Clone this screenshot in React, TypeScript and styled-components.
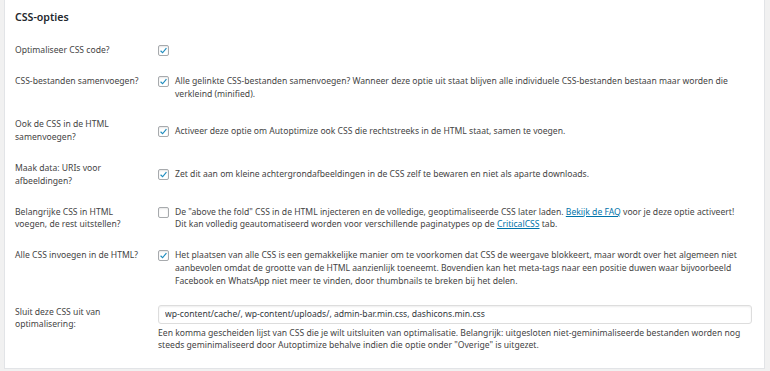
import React from 'react'
import styled, { createGlobalStyle } from 'styled-components'

const GlobalStyle = createGlobalStyle`
	html, body {
		margin: 0;
		padding: 0;
		background: #f1f1f1;
	}
	body {
		font-family: 'Noto Sans', 'Open Sans', sans-serif;
		font-size: 8.6px;
		color: #444;
	}
`

const Page = styled.div`
	padding: 0 5px 6px 4px;
`
const Panel = styled.div`
	background: #fff;
	border: 1px solid #e2e4e7;
	border-top: none;
	padding: 10px 12px 7px 9px;
`
const Title = styled.h2`
	margin: 0 0 11px 1px;
	font-size: 10.6px;
	line-height: 14px;
	font-weight: 600;
	color: #23282d;
`
const Row = styled.div`
	display: grid;
	grid-template-columns: 144px 1fr;
	padding: 9px 0;
	line-height: 12.8px;
`
const Label = styled.div`
	align-self: start;
	width: 130px;
	padding-left: 1px;
`
const Field = styled.div`
	align-self: center;
	display: flex;
	align-items: flex-start;
	gap: 6px;
`
const Box = styled.span`
	flex: none;
	width: 11px;
	height: 11px;
	margin-top: 1px;
	box-sizing: border-box;
	border: 1px solid #a7aaad;
	border-radius: 2px;
	background: #fff;
	box-shadow: inset 0 1px 2px rgba(0, 0, 0, 0.1);
	display: flex;
	align-items: center;
	justify-content: center;
`
const Text = styled.div`
	flex: 1;
`
const Link = styled.a`
	color: #0073aa;
	text-decoration: underline;
`
const Stack = styled.div`
	display: flex;
	flex-direction: column;
	gap: 3px;
	margin-top: -1px;
`
const Input = styled.input`
	box-sizing: border-box;
	width: 100%;
	height: 19px;
	margin: 0;
	padding: 0 6px;
	border: 1px solid #ddd;
	border-radius: 3px;
	box-shadow: inset 0 1px 2px rgba(0, 0, 0, 0.07);
	font: inherit;
	font-size: 8.6px;
	color: #32373c;
`
const Hint = styled.div``

type Option = {
	label: React.ReactNode
	checked: boolean
	text?: React.ReactNode
}

const options: Option[] = [
	{ label: 'Optimaliseer CSS code?', checked: true },
	{
		label: 'CSS-bestanden samenvoegen?',
		checked: true,
		text: 'Alle gelinkte CSS-bestanden samenvoegen? Wanneer deze optie uit staat blijven alle individuele CSS-bestanden bestaan maar worden die verkleind (minified).',
	},
	{
		label: 'Ook de CSS in de HTML samenvoegen?',
		checked: true,
		text: 'Activeer deze optie om Autoptimize ook CSS die rechtstreeks in de HTML staat, samen te voegen.',
	},
	{
		label: 'Maak data: URIs voor afbeeldingen?',
		checked: true,
		text: 'Zet dit aan om kleine achtergrondafbeeldingen in de CSS zelf te bewaren en niet als aparte downloads.',
	},
	{
		label: 'Belangrijke CSS in HTML voegen, de rest uitstellen?',
		checked: false,
		text: (
			<>
				De "above the fold" CSS in de HTML injecteren en de volledige, geoptimaliseerde CSS later laden.{' '}
				<Link href='#'>Bekijk de FAQ</Link> voor je deze optie activeert!
				<br />
				Dit kan volledig geautomatiseerd worden voor verschillende paginatypes op de{' '}
				<Link href='#'>CriticalCSS</Link> tab.
			</>
		),
	},
	{
		label: 'Alle CSS invoegen in de HTML?',
		checked: true,
		text: 'Het plaatsen van alle CSS is een gemakkelijke manier om te voorkomen dat CSS de weergave blokkeert, maar wordt over het algemeen niet aanbevolen omdat de grootte van de HTML aanzienlijk toeneemt. Bovendien kan het meta-tags naar een positie duwen waar bijvoorbeeld Facebook en WhatsApp niet meer te vinden, door thumbnails te breken bij het delen.',
	},
]

const Check: React.FC<{ checked: boolean }> = ({ checked }) => (
	<Box>
		{checked && (
			<svg width='9' height='9' viewBox='0 0 20 20'>
				<path d='M3.5 10.5 L8 15 L16.5 4.5' fill='none' stroke='#1e8cbe' strokeWidth='2.6' />
			</svg>
		)}
	</Box>
)

const App: React.FC = () => {
	return (
		<Page>
			<GlobalStyle />
			<Panel>
				<Title>CSS-opties</Title>
				{options.map((o, i) => (
					<Row key={i}>
						<Label>{o.label}</Label>
						<Field>
							<Check checked={o.checked} />
							{o.text && <Text>{o.text}</Text>}
						</Field>
					</Row>
				))}
				<Row>
					<Label>Sluit deze CSS uit van optimalisering:</Label>
					<Stack>
						<Input defaultValue='wp-content/cache/, wp-content/uploads/, admin-bar.min.css, dashicons.min.css' />
						<Hint>
							Een komma gescheiden lijst van CSS die je wilt uitsluiten van optimalisatie. Belangrijk: uitgesloten
							niet-geminimaliseerde bestanden worden nog steeds geminimaliseerd door Autoptimize behalve indien die
							optie onder "Overige" is uitgezet.
						</Hint>
					</Stack>
				</Row>
			</Panel>
		</Page>
	)
}

export default App
